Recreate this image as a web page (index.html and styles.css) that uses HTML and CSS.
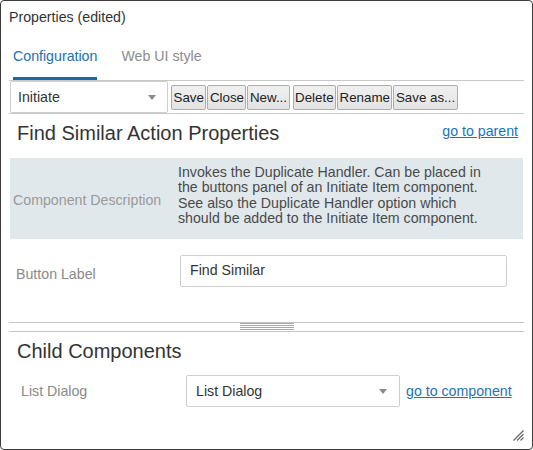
FILE: index.html
```html
<!DOCTYPE html>
<html>
<head>
<meta charset="utf-8">
<link rel="stylesheet" href="styles.css">
</head>
<body>
<div class="window">
  <div class="title">Properties (edited)</div>
  <div class="tabs">
    <div class="tab active">Configuration</div>
    <div class="tab">Web UI style</div>
  </div>
  <div class="toolbar">
    <div class="select select-main"><span>Initiate</span><span class="arrow"></span></div>
    <div class="btns">
      <button class="btn">Save</button>
      <button class="btn">Close</button>
      <button class="btn">New...</button>
      <button class="btn sep">Delete</button>
      <button class="btn">Rename</button>
      <button class="btn">Save as...</button>
    </div>
  </div>
  <div class="content">
    <div class="head-row">
      <div class="heading">Find Similar Action Properties</div>
      <a class="link parent-link" href="#">go to parent</a>
    </div>
    <div class="desc">
      <div class="desc-label">Component Description</div>
      <div class="desc-text">Invokes the Duplicate Handler. Can be placed in the buttons panel of an Initiate Item component. See also the Duplicate Handler option which should be added to the Initiate Item component.</div>
    </div>
    <div class="field-row">
      <div class="field-label">Button Label</div>
      <div class="input">Find Similar</div>
    </div>
    <div class="splitter"><div class="grip"></div></div>
    <div class="heading child-heading">Child Components</div>
    <div class="child-row">
      <div class="child-label">List Dialog</div>
      <div class="select select-child"><span>List Dialog</span><span class="arrow"></span></div>
      <a class="link child-link" href="#">go to component</a>
    </div>
  </div>
  <svg class="resize" width="11" height="11" viewBox="0 0 11 11">
    <path d="M0.5 10.5 L10.5 0.5 M4 10.5 L10.5 4 M7.5 10.5 L10.5 7.5" stroke="#666" stroke-width="1.2" fill="none"/>
  </svg>
</div>
</body>
</html>
```

FILE: styles.css
```css
html, body {
  margin: 0;
  padding: 0;
  background: #fff;
}

.window {
  position: relative;
  box-sizing: border-box;
  width: 533px;
  height: 450px;
  border: 1px solid #3c3c3c;
  border-radius: 4px;
  font-family: "Liberation Sans", Arial, sans-serif;
  font-size: 14.2px;
  color: #333;
  background: #fff;
}

.title {
  padding: 8px 8px 0;
  line-height: 16px;
  height: 16px;
  color: #333;
}

.tabs {
  display: flex;
  gap: 24px;
  margin: 0 8px;
  padding-left: 4px;
  border-bottom: 1px solid #c8c8c8;
}

.tab {
  padding: 23px 0 13px;
  line-height: 16px;
  border-bottom: 3px solid transparent;
  color: #8c8c8c;
}

.tab.active {
  color: #1f6fae;
  border-bottom-color: #0f6cb3;
}

.toolbar {
  display: flex;
  align-items: center;
  height: 32px;
  margin: 0 8px;
  padding-left: 1px;
  border-bottom: 1px solid #c8c8c8;
}

.select {
  box-sizing: border-box;
  display: flex;
  align-items: center;
  justify-content: space-between;
  height: 32px;
  border: 1px solid #cfcfcf;
  border-radius: 2px;
  background: #fff;
  color: #333;
}

.select-main {
  width: 158px;
  padding: 0 11px 0 7px;
}

.arrow {
  width: 0;
  height: 0;
  border-left: 4.5px solid transparent;
  border-right: 4.5px solid transparent;
  border-top: 5px solid #8a8a8a;
  margin-top: 1px;
}

.btns {
  display: flex;
  gap: 1px;
  margin-left: 3px;
}

.btn {
  box-sizing: border-box;
  height: 25px;
  padding: 0 1.5px;
  border: 1px solid #adadad;
  border-radius: 2px;
  background: linear-gradient(#f0f0f0, #e3e3e3);
  font-family: "Liberation Sans", Arial, sans-serif;
  font-size: 13.333px;
  color: #222;
}

.btn.sep {
  margin-left: 2px;
}

.content {
  margin: 0 8px;
}

.head-row {
  display: flex;
  justify-content: space-between;
  align-items: flex-start;
  padding: 7px 6px 0 8px;
}

.heading {
  font-size: 20px;
  line-height: 24px;
  color: #333;
}

.link {
  color: #1b74b9;
  text-decoration: underline;
  line-height: 16px;
}

.parent-link {
  margin-top: 2px;
}

.desc {
  display: flex;
  box-sizing: border-box;
  height: 81px;
  margin: 13px 1px 0;
  background: #e1e8eb;
}

.desc-label {
  width: 165px;
  padding-left: 3px;
  align-self: center;
  padding-top: 3px;
  color: #9a9a9a;
  line-height: 16px;
}

.desc-text {
  width: 316px;
  padding-top: 7px;
  line-height: 15.4px;
  color: #4a4a4a;
}

.field-row {
  display: flex;
  margin-top: 16px;
  padding-left: 7px;
}

.field-label {
  width: 164px;
  padding-top: 11px;
  line-height: 16px;
  color: #8a8a8a;
}

.input {
  box-sizing: border-box;
  width: 327px;
  height: 32px;
  padding: 0 9px;
  border: 1px solid #cfcfcf;
  border-radius: 2px;
  line-height: 29px;
  color: #333;
}

.splitter {
  display: flex;
  justify-content: center;
  height: 8px;
  margin-top: 35px;
  border-top: 1px solid #c4c4c4;
  border-bottom: 1px solid #c4c4c4;
}

.grip {
  width: 54px;
  height: 7px;
  background: repeating-linear-gradient(#a8a8a8 0 1px, transparent 1px 2px);
}

.child-heading {
  margin-top: 7px;
  padding-left: 8px;
}

.child-row {
  display: flex;
  align-items: center;
  margin-top: 12px;
  padding-left: 12px;
}

.child-label {
  width: 165px;
  color: #8a8a8a;
  line-height: 16px;
}

.select-child {
  width: 214px;
  padding: 0 12px 0 9px;
}

.child-link {
  margin-left: 6px;
}

.resize {
  position: absolute;
  right: 8px;
  bottom: 8px;
}
```
